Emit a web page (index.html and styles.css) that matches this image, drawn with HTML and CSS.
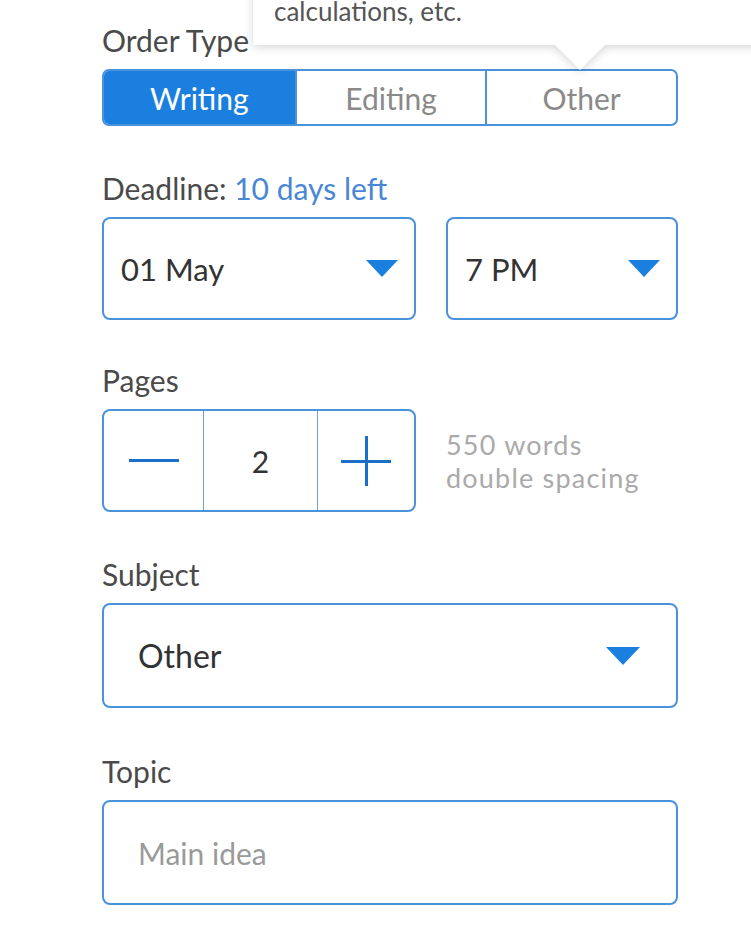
FILE: index.html
```html
<!DOCTYPE html>
<html lang="en">
<head>
<meta charset="utf-8">
<title>Order form</title>
<link rel="stylesheet" href="styles.css">
</head>
<body>
<div class="tooltip">
  <div class="tooltip-box">calculations, etc.</div>
</div>
<form class="form">
  <div class="field">
    <div class="label">Order Type</div>
    <div class="segmented">
      <div class="seg seg-active">Writing</div>
      <div class="seg">Editing</div>
      <div class="seg">Other</div>
    </div>
  </div>

  <div class="field">
    <div class="label">Deadline: <span class="accent">10 days left</span></div>
    <div class="deadline-row">
      <div class="select select-sm"><span>01 May</span><span class="caret"></span></div>
      <div class="select select-sm"><span>7 PM</span><span class="caret"></span></div>
    </div>
  </div>

  <div class="field field-pages">
    <div class="label">Pages</div>
    <div class="pages-row">
      <div class="stepper">
        <div class="step"><span class="minus"></span></div>
        <div class="step step-value">2</div>
        <div class="step"><span class="plus"></span></div>
      </div>
      <div class="hint">
        <div>550 words</div>
        <div>double spacing</div>
      </div>
    </div>
  </div>

  <div class="field">
    <div class="label">Subject</div>
    <div class="select select-lg"><span>Other</span><span class="caret caret-lg"></span></div>
  </div>

  <div class="field field-topic">
    <div class="label">Topic</div>
    <div class="input">Main idea</div>
  </div>
</form>
</body>
</html>
```
FILE: styles.css
```css
html, body {
  margin: 0;
  padding: 0;
  background: #ffffff;
  overflow: hidden;
}
body {
  font-family: "Lato", "Noto Sans", sans-serif;
  color: #444;
  position: relative;
  width: 751px;
  height: 932px;
}
.form {
  width: 576px;
  margin: 0 0 0 102px;
  padding-top: 22px;
}
.field + .field {
  margin-top: 44px;
}
.field + .field-pages {
  margin-top: 42px;
}
.field + .field-topic {
  margin-top: 45px;
}
.label {
  font-size: 30px;
  line-height: 36px;
  color: #4a4a4a;
  margin-bottom: 11px;
}
.accent {
  color: #4a86d6;
}
.segmented {
  display: grid;
  grid-template-columns: 1fr 1fr 1fr;
  height: 57px;
  box-sizing: border-box;
  border: 2px solid #4a92dc;
  border-radius: 7px;
  overflow: hidden;
}
.seg {
  display: flex;
  align-items: center;
  justify-content: center;
  font-size: 30px;
  color: #8a8a8a;
}
.seg + .seg {
  border-left: 2px solid #4a92dc;
}
.seg-active {
  background: #1b7fdf;
  color: #ffffff;
}
.deadline-row {
  display: grid;
  grid-template-columns: 314px 232px;
  column-gap: 30px;
}
.select {
  display: flex;
  align-items: center;
  justify-content: space-between;
  box-sizing: border-box;
  border: 2px solid #4a92dc;
  border-radius: 8px;
  color: #333;
}
.select-sm {
  height: 103px;
  padding: 0 16px 0 17px;
  font-size: 31px;
}
.select-lg {
  height: 105px;
  padding: 0 36px 0 34px;
  font-size: 32px;
}
.caret {
  width: 0;
  height: 0;
  border-left: 16px solid transparent;
  border-right: 16px solid transparent;
  border-top: 17px solid #1b7fdf;
}
.caret-lg {
  border-left-width: 17px;
  border-right-width: 17px;
  border-top-width: 18px;
}
.pages-row {
  display: flex;
  align-items: center;
  gap: 30px;
}
.stepper {
  display: grid;
  grid-template-columns: 99px 114px 1fr;
  width: 314px;
  height: 103px;
  box-sizing: border-box;
  border: 2px solid #4a92dc;
  border-radius: 8px;
}
.step {
  display: flex;
  align-items: center;
  justify-content: center;
}
.step + .step {
  border-left: 1px solid #6e9fd2;
}
.step-value {
  font-size: 30px;
  color: #333;
}
.minus {
  display: block;
  width: 50px;
  height: 3px;
  background: #1a6fc8;
}
.plus {
  display: block;
  position: relative;
  width: 50px;
  height: 50px;
}
.plus::before,
.plus::after {
  content: "";
  position: absolute;
  background: #1a6fc8;
}
.plus::before {
  left: 0;
  right: 0;
  top: 24px;
  height: 3px;
}
.plus::after {
  top: 0;
  bottom: 0;
  left: 24px;
  width: 3px;
}
.hint {
  font-size: 27px;
  line-height: 33px;
  letter-spacing: 1.2px;
  color: #aaaaaa;
}
.input {
  display: flex;
  align-items: center;
  height: 105px;
  box-sizing: border-box;
  border: 2px solid #4a92dc;
  border-radius: 8px;
  padding-left: 34px;
  font-size: 30px;
  color: #9a9a9a;
}
.tooltip {
  position: absolute;
  left: 253px;
  right: -30px;
  top: -40px;
  filter: drop-shadow(0 2px 5px rgba(0, 0, 0, 0.16));
  z-index: 2;
}
.tooltip-box {
  background: #ffffff;
  height: 85px;
  box-sizing: border-box;
  padding: 38px 0 0 21px;
  font-size: 26px;
  line-height: 26px;
  color: #555;
}
.tooltip::after {
  content: "";
  position: absolute;
  left: 302px;
  top: 85px;
  width: 0;
  height: 0;
  border-left: 25px solid transparent;
  border-right: 25px solid transparent;
  border-top: 25px solid #ffffff;
}
```
